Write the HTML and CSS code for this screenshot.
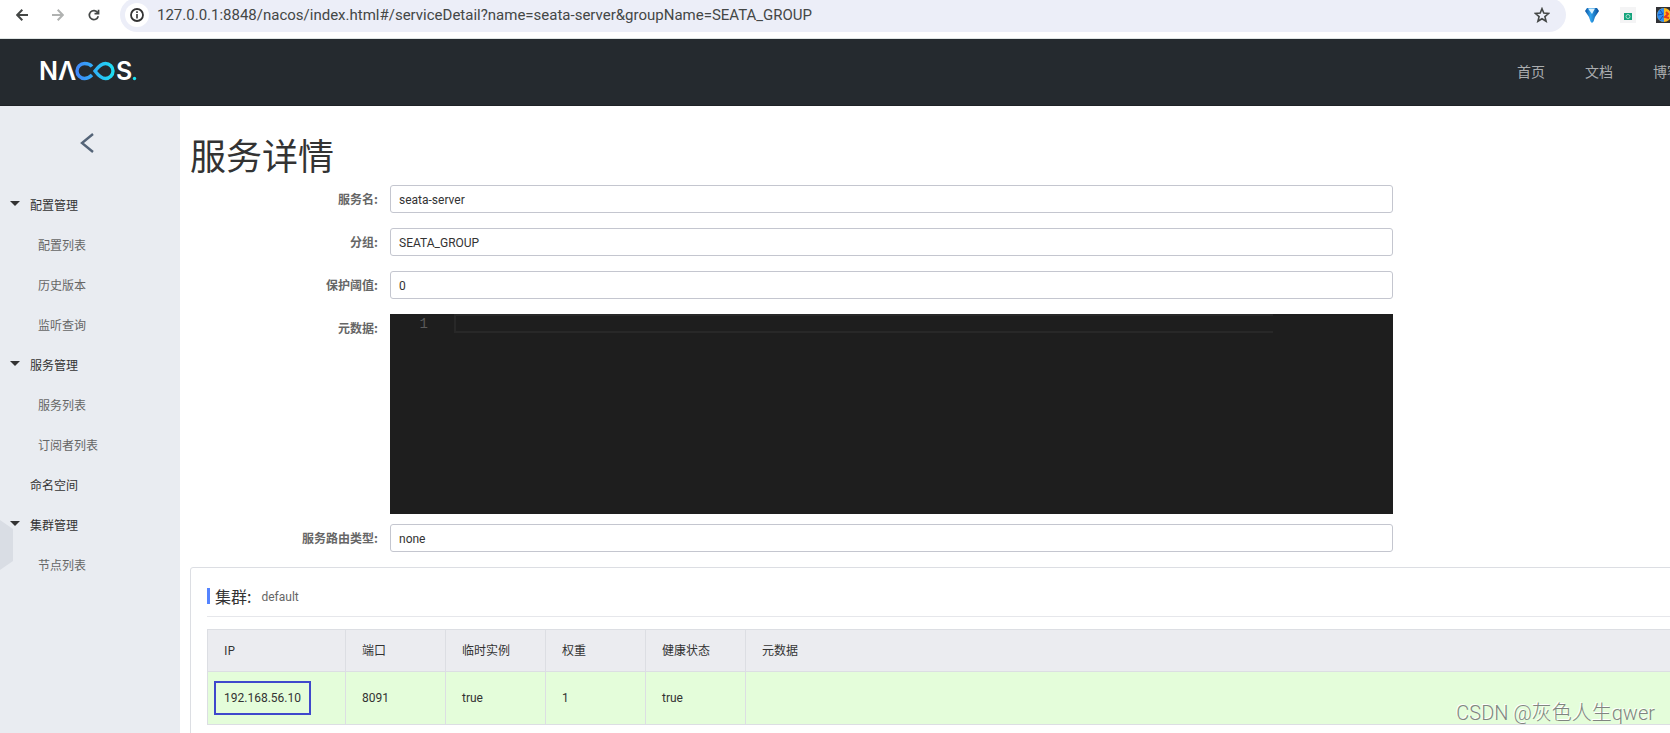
FILE: index.html
```html
<!DOCTYPE html>
<html lang="zh-CN">
<head>
<meta charset="utf-8">
<title>Nacos</title>
<link rel="stylesheet" href="styles.css">
</head>
<body>
<div class="toolbar">
  <div class="toolbar-nav">
    <button class="icon-btn" aria-label="Back">
      <svg width="12" height="12" viewBox="0 0 12 12" fill="none" stroke="#444746" stroke-width="2"><path d="M12 6H1.5M6.3 .8 1.2 6l5.1 5.2"/></svg>
    </button>
    <button class="icon-btn" aria-label="Forward">
      <svg width="12" height="12" viewBox="0 0 12 12" fill="none" stroke="#b0b2b1" stroke-width="2"><path d="M0 6h10.500M5.700 .8 10.800 6l-5.100 5.200"/></svg>
    </button>
    <button class="icon-btn" aria-label="Reload">
      <svg width="14" height="14" viewBox="0 0 14 14" fill="none" stroke="#444746" stroke-width="2"><path d="M11.300 4.200A5.300 5.300 0 1 0 12 8.500M12.300 .8v4.700H7.600"/></svg>
    </button>
  </div>
  <div class="address">
    <button class="site-info" aria-label="Site information">
      <svg width="14" height="14" viewBox="0 0 14 14"><circle cx="7" cy="7" r="6" fill="none" stroke="#333" stroke-width="1.800"/><path d="M7 6v4.500M7 3.300v1.600" stroke="#333" stroke-width="1.600"/></svg>
    </button>
    <input class="url" aria-label="Address" value="127.0.0.1:8848/nacos/index.html#/serviceDetail?name=seata-server&amp;groupName=SEATA_GROUP">
    <button class="icon-btn" aria-label="Bookmark">
      <svg width="16" height="16" viewBox="0 0 16 16" fill="none" stroke="#444746" stroke-width="1.600"><path d="m8 1.700 1.800 4.400 4.800.4-3.700 3.100 1.200 4.700L8 11.800l-4.100 2.500 1.200-4.700-3.700-3.100 4.800-.4z"/></svg>
    </button>
  </div>
  <div class="extensions">
    <svg width="16" height="16" viewBox="0 0 16 16"><defs><linearGradient id="pin" x2="1"><stop stop-color="#0a4f9e"/><stop offset=".4" stop-color="#2fa4ee"/><stop offset="1" stop-color="#064a96"/></linearGradient></defs><path d="M3 1h10l2 3-4 6-1.500 4.500L8 16l-1.500-1.500L5 10 1 4z" fill="url(#pin)"/><path d="M4 1.500h7L8 7z" fill="#d8f1ff"/></svg>
    <svg width="16" height="16" viewBox="0 0 16 16"><path d="M0 0h16v16H0z" fill="#f4f4f5"/><path d="M4 6h8v7H4z" fill="#13a37c"/><circle cx="8" cy="9.500" r="2" fill="none" stroke="#a7e0cf"/></svg>
    <svg width="16" height="16" viewBox="0 0 16 16"><path d="M0 0h16v16H0z" fill="#303135"/><circle cx="8" cy="8" r="7" fill="#ffb81c"/><path d="M8 1a7 7 0 0 0 0 14z" fill="#2e8df0"/><path d="m4 3 3 4-5 1m2 5 3-4" stroke="#174cae" fill="none"/><path d="m10 5 2 2-3 3 4 1" stroke="#e23a20" stroke-width="2" fill="none"/></svg>
  </div>
</div>

<header class="header">
  <a class="logo" href="#" aria-label="NACOS">
    <svg width="104" height="40" viewBox="-3 -10 104 40">
      <defs><linearGradient id="loop" gradientUnits="userSpaceOnUse" x1="36" y1="0" x2="76" y2="0"><stop stop-color="#4186fb"/><stop offset="1" stop-color="#1be3f2"/></linearGradient></defs>
      <text class="logo-text" x="-1" y="19">N</text>
      <text class="logo-text" x="18" y="19">Λ</text>
      <path d="M52 5.500C50 3 47.500 2.500 44.500 2.500a7.500 7.500 0 0 0 0 15c3 0 5-1 7.500-3.500M55 10c3-4 6-7.500 10.500-7.500a7.500 7.500 0 0 1 0 15c-4.500 0-7.500-3.500-10.500-7.500z" fill="none" stroke="url(#loop)" stroke-width="3.400"/>
      <text class="logo-text" x="76" y="19">S</text>
      <circle cx="94.500" cy="17.500" r="1.700" fill="#1be3f2"/>
    </svg>
  </a>
  <nav class="top-nav">
    <a href="#">首页</a>
    <a href="#">文档</a>
    <a href="#">博客</a>
  </nav>
</header>

<div class="layout">
  <aside class="sidebar">
    <button class="back" aria-label="返回">
      <svg width="14" height="20" viewBox="0 0 14 20" fill="none" stroke="#546478" stroke-width="2.400"><path d="M13 1 2 10l11 9"/></svg>
    </button>
    <nav class="menu">
      <a class="group open" href="#">配置管理</a>
      <a class="item" href="#">配置列表</a>
      <a class="item" href="#">历史版本</a>
      <a class="item" href="#">监听查询</a>
      <a class="group open" href="#">服务管理</a>
      <a class="item" href="#">服务列表</a>
      <a class="item" href="#">订阅者列表</a>
      <a class="group" href="#">命名空间</a>
      <a class="group open" href="#">集群管理</a>
      <a class="item" href="#">节点列表</a>
    </nav>
    <div class="side-tab"></div>
  </aside>

  <main class="content">
    <h1>服务详情</h1>
    <form class="form">
      <label for="name">服务名:</label>
      <input id="name" class="field" value="seata-server" readonly>
      <label for="group">分组:</label>
      <input id="group" class="field" value="SEATA_GROUP" readonly>
      <label for="threshold">保护阈值:</label>
      <input id="threshold" class="field" value="0" readonly>
      <label for="metadata">元数据:</label>
      <div class="editor">
        <span class="line-number">1</span>
        <textarea id="metadata" rows="1" readonly></textarea>
      </div>
      <label for="selector">服务路由类型:</label>
      <input id="selector" class="field" value="none" readonly>
    </form>

    <section class="card">
      <div class="card-head">
        <h2>集群:</h2>
        <span class="cluster-name">default</span>
      </div>
      <table>
        <colgroup><col class="col-ip"><col class="col"><col class="col"><col class="col"><col class="col"><col></colgroup>
        <thead>
          <tr><th>IP</th><th>端口</th><th>临时实例</th><th>权重</th><th>健康状态</th><th>元数据</th></tr>
        </thead>
        <tbody>
          <tr><td><span class="marked">192.168.56.10</span></td><td>8091</td><td>true</td><td>1</td><td>true</td><td></td></tr>
        </tbody>
      </table>
    </section>
  </main>
</div>
<div class="watermark">CSDN @灰色人生qwer</div>
</body>
</html>
```
FILE: styles.css
```css
* { box-sizing: border-box; }

body {
  margin: 0;
  min-height: 100vh;
  display: flex;
  flex-direction: column;
  position: relative;
  overflow: hidden;
  background: #fff;
  color: #333;
  font: 12px/18px "Noto Sans CJK SC", sans-serif;
}

a { color: inherit; text-decoration: none; }

button {
  display: flex;
  align-items: center;
  justify-content: center;
  padding: 0;
  border: 0;
  background: none;
}

/* Browser toolbar */
.toolbar {
  display: flex;
  height: 39px;
  padding-left: 16px;
  border-bottom: 1px solid #dfe5e4;
}

.toolbar-nav {
  display: flex;
  gap: 24px;
  height: 30px;
  margin-right: 20px;
}

.toolbar-nav .icon-btn { width: 12px; }

.address {
  flex: 1;
  display: flex;
  align-items: center;
  height: 34px;
  margin-top: -2px;
  padding: 0 16px 0 5px;
  border-radius: 17px;
  background: #eceef8;
}

.site-info {
  width: 24px;
  height: 24px;
  border-radius: 50%;
  background: #fff;
}

.url {
  flex: 1;
  min-width: 0;
  margin-left: 8px;
  padding: 0;
  border: 0;
  background: none;
  color: #444746;
  font: 15px/22px "Roboto", sans-serif;
}

.extensions {
  display: flex;
  align-items: center;
  gap: 20px;
  height: 30px;
  margin: 0 -2px 0 18px;
}

/* Site header */
.header {
  display: flex;
  align-items: center;
  justify-content: space-between;
  height: 67px;
  padding-left: 37px;
  border-bottom: 1px solid #1e2226;
  background: #252a2f;
}

.logo { display: flex; margin-top: -2px; }

.logo-text {
  fill: #fff;
  font: 600 25px "Inter", sans-serif;
}

.top-nav {
  display: flex;
  gap: 40px;
  margin: -2px -11px 0 0;
  color: #abadaf;
  font-size: 14px;
}

/* Layout */
.layout { flex: 1; display: flex; }

.sidebar {
  position: relative;
  flex: 0 0 180px;
  background: #e9ecf1;
}

.back {
  margin: 27px 0 32px 80px;
}

.menu { display: flex; flex-direction: column; }

.menu a { line-height: 40px; }

.group {
  display: flex;
  align-items: center;
  padding-left: 30px;
}

.group.open { padding-left: 10px; }

.group.open::before {
  content: "";
  margin: 0 10px 4px 0;
  border: 5px solid transparent;
  border-top-color: #333;
  border-bottom: 0;
}

.item { padding-left: 38px; color: #666; }

.side-tab {
  position: absolute;
  left: 0;
  top: 414px;
  width: 13px;
  height: 50px;
  background: #d9dde4;
  clip-path: polygon(0 0, 100% 18%, 100% 82%, 0 100%);
}

.content {
  flex: 1;
  min-width: 0;
  padding-left: 10px;
}

h1 {
  margin: 23px 0 6px;
  font-size: 36px;
  font-weight: 400;
  line-height: 50px;
}

.form {
  display: grid;
  grid-template-columns: 188px minmax(0, 1003fr) 265fr;
  column-gap: 12px;
  row-gap: 15px;
}

.form label {
  grid-column: 1;
  color: #666;
  font-weight: 700;
  line-height: 28px;
  text-align: right;
}

.field {
  height: 28px;
  padding: 1px 8px 0;
  border: 1px solid #c4c6cf;
  border-radius: 3px;
  color: #333;
  font: 12px/18px "Roboto", "Noto Sans CJK SC", sans-serif;
}

.editor {
  display: flex;
  align-items: flex-start;
  height: 200px;
  margin-bottom: -5px;
  padding-right: 120px;
  background: #1e1e1e;
}

.line-number {
  width: 38px;
  margin-right: 26px;
  color: #5a5a5a;
  font: 14px/20px "Liberation Mono", monospace;
  text-align: right;
}

.editor textarea {
  flex: 1;
  height: 19px;
  padding: 0;
  border: 2px solid #282828;
  border-right: 0;
  background: none;
  color: #d4d4d4;
  resize: none;
}

/* Cluster card */
.card {
  margin: 15px -40px 0 0;
  padding: 16px;
  border: 1px solid #dcdee3;
  border-radius: 3px;
}

.card-head {
  display: flex;
  align-items: center;
  gap: 10px;
  padding-bottom: 8px;
  margin-bottom: 12px;
  border-bottom: 1px solid #e6e7eb;
  color: #666;
}

.card-head h2 {
  display: flex;
  align-items: center;
  gap: 5px;
  margin: 0;
  color: #333;
  font-size: 16px;
  font-weight: 400;
  line-height: 24px;
}

.card-head h2::before {
  content: "";
  width: 3px;
  height: 16px;
  background: #5584ff;
}

.cluster-name {
  padding-top: 2px;
  font-family: "Roboto", "Noto Sans CJK SC", sans-serif;
}

table {
  width: 100%;
  table-layout: fixed;
  border-collapse: collapse;
}

.col-ip { width: 138px; }
.col { width: 100px; }

th, td {
  padding: 11px 16px 12px;
  border: 1px solid #dcdee3;
  font-weight: 400;
  text-align: left;
}

th { background: #ebecf0; }

td {
  padding: 17px 16px;
  background: #e4fdda;
  font-family: "Roboto", "Noto Sans CJK SC", sans-serif;
}

.marked {
  display: inline-block;
  margin: -8px -10px;
  padding: 6px 8px;
  border: 2px solid #3f48cc;
}

.watermark {
  position: absolute;
  right: 15px;
  bottom: 15px;
  color: #808580;
  font: 300 20px/28px "Roboto", "Noto Sans CJK SC", sans-serif;
  text-shadow: -1px -1px 0 #fff;
}
```
